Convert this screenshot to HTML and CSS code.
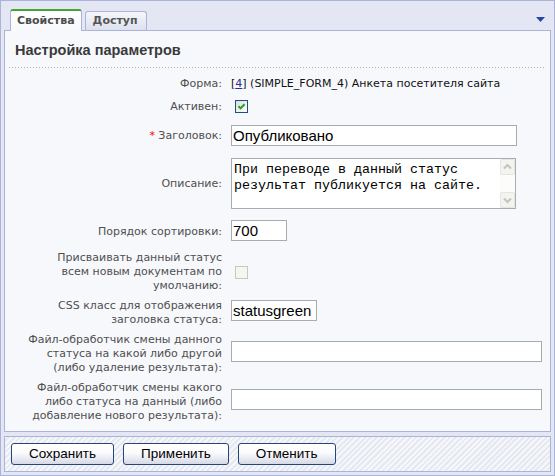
FILE: index.html
```html
<!DOCTYPE html>
<html>
<head>
<meta charset="utf-8">
<link rel="stylesheet" href="styles.css">
</head>
<body>
<div class="frame">
  <div class="tabbar">
    <div class="tab tab-active">Свойства</div>
    <div class="tab">Доступ</div>
    <svg class="menu-arrow" width="9" height="5" viewBox="0 0 9 5"><path d="M0 0H9L4.5 5Z" fill="#2646a8"/></svg>
  </div>
  <div class="panel">
    <h2 class="panel-title">Настройка параметров</h2>
    <div class="sep"></div>
    <div class="form">
      <div class="row">
        <div class="label">Форма:</div>
        <div class="value">[<a class="link" href="#">4</a>] (SIMPLE_FORM_4) Анкета посетителя сайта</div>
      </div>
      <div class="row">
        <div class="label">Активен:</div>
        <div><span class="check check-on"><svg width="11" height="11" viewBox="0 0 11 11"><polyline points="2.5,5.2 4.5,7.4 8.6,3.2" fill="none" stroke="#21a121" stroke-width="2"/></svg></span></div>
      </div>
      <div class="row">
        <div class="label"><span class="req">*</span> Заголовок:</div>
        <div><input class="input w-title" type="text" value="Опубликовано"></div>
      </div>
      <div class="row">
        <div class="label">Описание:</div>
        <div class="memo">
          <div class="memo-text">При переводе в данный статус<br>результат публикуется на сайте.</div>
          <div class="memo-scroll">
            <span class="sb-btn"><svg width="15" height="16" viewBox="0 0 15 16"><polyline points="4,9.5 7.5,6 11,9.5" fill="none" stroke="#c4c4bc" stroke-width="2"/></svg></span>
            <span class="sb-btn"><svg width="15" height="16" viewBox="0 0 15 16"><polyline points="4,6.5 7.5,10 11,6.5" fill="none" stroke="#c4c4bc" stroke-width="2"/></svg></span>
          </div>
        </div>
      </div>
      <div class="row">
        <div class="label">Порядок сортировки:</div>
        <div><input class="input input-sort w-sort" type="text" value="700"></div>
      </div>
      <div class="row">
        <div class="label">Присваивать данный статус<br>всем новым документам по<br>умолчанию:</div>
        <div><span class="check check-off"></span></div>
      </div>
      <div class="row row-multi">
        <div class="label">CSS класс для отображения<br>заголовка статуса:</div>
        <div><input class="input w-css" type="text" value="statusgreen"></div>
      </div>
      <div class="row row-multi">
        <div class="label">Файл-обработчик смены данного<br>статуса на какой либо другой<br>(либо удаление результата):</div>
        <div><input class="input w-file" type="text" value=""></div>
      </div>
      <div class="row row-multi">
        <div class="label">Файл-обработчик смены какого<br>либо статуса на данный (либо<br>добавление нового результата):</div>
        <div><input class="input w-file" type="text" value=""></div>
      </div>
    </div>
  </div>
  <div class="buttons">
    <button class="btn" type="button">Сохранить</button>
    <button class="btn" type="button">Применить</button>
    <button class="btn" type="button">Отменить</button>
  </div>
</div>
</body>
</html>
```

FILE: styles.css
```css
html, body {
  margin: 0;
  padding: 0;
}
body {
  width: 555px;
  height: 476px;
  background: #ffffff;
  font-family: "DejaVu Sans", Verdana, sans-serif;
  font-size: 11px;
}
.frame {
  box-sizing: border-box;
  width: 555px;
  height: 476px;
  border: 1px solid #aab4d8;
  background: #e4e7f3;
  padding: 0 3px 3px 3px;
  display: flex;
  flex-direction: column;
}
.tabbar {
  height: 29px;
  flex: none;
  display: flex;
  align-items: flex-end;
  padding: 0 6px;
}
.tab {
  box-sizing: border-box;
  height: 19px;
  padding: 2px 8px 0 7px;
  margin-left: 3px;
  border: 1px solid #aab4d8;
  border-bottom: none;
  border-radius: 3px 3px 0 0;
  background: linear-gradient(#f5f6fb, #dde1ef);
  color: #555555;
  font-weight: bold;
  line-height: 13px;
}
.tab-active {
  position: relative;
  z-index: 1;
  height: 22px;
  margin-left: 0;
  margin-bottom: -1px;
  padding: 3px 6px 0 6px;
  border-top: 2px solid #41a833;
  background: linear-gradient(#ffffff, #f7f8fc);
  color: #4d4d4d;
}
.menu-arrow {
  margin-left: auto;
  align-self: flex-start;
  margin-top: 16px;
}
.panel {
  flex: 1;
  display: flex;
  flex-direction: column;
  border: 1px solid #aab4d8;
  background: #f7f8fc;
}
.panel-title {
  margin: 0;
  padding: 10px 10px 0 10px;
  font-family: "Liberation Sans", Arial, sans-serif;
  font-size: 14.5px;
  line-height: 18px;
  font-weight: bold;
  color: #3a3a3a;
}
.sep {
  height: 1px;
  margin: 8px 5px 0 4px;
  background-image: linear-gradient(to right, #b4b4b4 1px, transparent 1px);
  background-size: 3px 1px;
}
.form {
  padding-top: 6px;
}
.row {
  display: grid;
  grid-template-columns: 217px 1fr;
  column-gap: 9px;
  align-items: center;
  padding: 3px 0;
}
.label {
  text-align: right;
  line-height: 14px;
  color: #4f4f4f;
}
.req {
  color: #ff0000;
}
.value {
  line-height: 14px;
  color: #111111;
}
.link {
  color: #2b2b9a;
  text-decoration: underline;
}
.check {
  display: block;
  box-sizing: border-box;
  width: 13px;
  height: 13px;
  margin: 3px 0 3px 4px;
}
.check svg {
  display: block;
}
.check-on {
  border: 1px solid #1c5180;
  background: linear-gradient(135deg, #dcdcd7, #ffffff);
}
.check-off {
  border: 1px solid #cac8bb;
  background: #f5f5f1;
}
.input {
  display: block;
  box-sizing: border-box;
  height: 21px;
  margin: 3px 0;
  padding: 0 1px;
  border: 1px solid #a5acb2;
  background: #ffffff;
  font-family: "Liberation Sans", Arial, sans-serif;
  font-size: 15px;
  color: #000000;
  outline: none;
}
.input-sort {
  margin: 2px 0 4px;
}
.row-multi .input {
  margin: 0 0 6px;
}
.w-title { width: 286px; }
.w-sort { width: 56px; }
.w-css { width: 86px; }
.w-file { width: 311px; }
.memo {
  box-sizing: border-box;
  width: 285px;
  height: 51px;
  margin: 3px 0;
  border: 1px solid #a5acb2;
  background: #ffffff;
  display: flex;
}
.memo-text {
  flex: 1;
  padding: 3px 2px;
  font-family: "Liberation Mono", "Courier New", monospace;
  font-size: 13.33px;
  line-height: 16px;
  color: #000000;
  white-space: nowrap;
}
.memo-scroll {
  width: 15px;
  display: flex;
  flex-direction: column;
  justify-content: space-between;
  background: #fcfcfb;
}
.sb-btn {
  display: block;
  box-sizing: border-box;
  width: 15px;
  height: 16px;
  background: #f3f3ef;
  border: 1px solid #e6e5de;
  border-radius: 2px;
}
.sb-btn svg {
  display: block;
  margin: -1px;
}
.buttons {
  flex: none;
  box-sizing: border-box;
  height: 36px;
  margin-top: 4px;
  padding: 6px 0 0 6px;
  border: 1px solid #aab4d8;
  display: flex;
  align-items: flex-start;
  gap: 9px;
  background: repeating-linear-gradient(135deg, #f6f7fa 0 2px, #e7e9f1 2px 4px);
}
.btn {
  box-sizing: border-box;
  height: 22px;
  padding: 0 17px;
  border: 1px solid #26457a;
  border-radius: 3px;
  background: linear-gradient(#ffffff, #fbfbfd 45%, #d5d9e6);
  font-family: "Liberation Sans", Arial, sans-serif;
  font-size: 13.5px;
  color: #000000;
  line-height: 20px;
}
```
